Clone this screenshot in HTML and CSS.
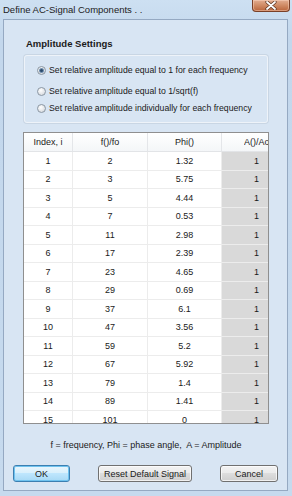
FILE: index.html
```html
<!DOCTYPE html>
<html>
<head>
<meta charset="utf-8">
<link rel="stylesheet" href="styles.css">
</head>
<body>
<div class="window">
  <div class="titlebar">
    <span class="title">Define AC-Signal Components . .</span>
    <div class="close"><svg width="12" height="9" viewBox="0 0 12 9"><path d="M2 1 L10 8 M10 1 L2 8" stroke="#5a3320" stroke-width="3.2" stroke-linecap="round"/><path d="M2 1 L10 8 M10 1 L2 8" stroke="#fff" stroke-width="1.8" stroke-linecap="round"/></svg></div>
  </div>
  <div class="client">
    <div class="heading">Amplitude Settings</div>
    <div class="group">
      <label class="radio r1"><span class="dot checked"></span>Set relative amplitude equal to 1 for each frequency</label>
      <label class="radio r2"><span class="dot"></span>Set relative amplitude equal to 1/sqrt(f)</label>
      <label class="radio r3"><span class="dot"></span>Set relative amplitude individually for each frequency</label>
    </div>
    <div class="grid">
      <div class="row head">
        <div class="c c1">Index, i</div>
        <div class="c c2">f()/fo</div>
        <div class="c c3">Phi()</div>
        <div class="c c4h"><span class="clip">A()/Ao</span></div>
      </div>
      <div class="row"><div class="c c1">1</div><div class="c c2">2</div><div class="c c3">1.32</div><div class="c c4">1</div></div>
      <div class="row"><div class="c c1">2</div><div class="c c2">3</div><div class="c c3">5.75</div><div class="c c4">1</div></div>
      <div class="row"><div class="c c1">3</div><div class="c c2">5</div><div class="c c3">4.44</div><div class="c c4">1</div></div>
      <div class="row"><div class="c c1">4</div><div class="c c2">7</div><div class="c c3">0.53</div><div class="c c4">1</div></div>
      <div class="row"><div class="c c1">5</div><div class="c c2">11</div><div class="c c3">2.98</div><div class="c c4">1</div></div>
      <div class="row"><div class="c c1">6</div><div class="c c2">17</div><div class="c c3">2.39</div><div class="c c4">1</div></div>
      <div class="row"><div class="c c1">7</div><div class="c c2">23</div><div class="c c3">4.65</div><div class="c c4">1</div></div>
      <div class="row"><div class="c c1">8</div><div class="c c2">29</div><div class="c c3">0.69</div><div class="c c4">1</div></div>
      <div class="row"><div class="c c1">9</div><div class="c c2">37</div><div class="c c3">6.1</div><div class="c c4">1</div></div>
      <div class="row"><div class="c c1">10</div><div class="c c2">47</div><div class="c c3">3.56</div><div class="c c4">1</div></div>
      <div class="row"><div class="c c1">11</div><div class="c c2">59</div><div class="c c3">5.2</div><div class="c c4">1</div></div>
      <div class="row"><div class="c c1">12</div><div class="c c2">67</div><div class="c c3">5.92</div><div class="c c4">1</div></div>
      <div class="row"><div class="c c1">13</div><div class="c c2">79</div><div class="c c3">1.4</div><div class="c c4">1</div></div>
      <div class="row"><div class="c c1">14</div><div class="c c2">89</div><div class="c c3">1.41</div><div class="c c4">1</div></div>
      <div class="row"><div class="c c1">15</div><div class="c c2">101</div><div class="c c3">0</div><div class="c c4">1</div></div>
    </div>
    <div class="legend">f = frequency, Phi = phase angle,&nbsp; A = Amplitude</div>
    <div class="buttons">
      <button class="btn ok">OK</button>
      <button class="btn reset">Reset Default Signal</button>
      <button class="btn cancel">Cancel</button>
    </div>
  </div>
</div>
</body>
</html>
```
FILE: styles.css
```css
html, body {
  margin: 0;
  padding: 0;
}
body {
  width: 292px;
  height: 496px;
  overflow: hidden;
  background: #c5d9ee;
  font-family: "Liberation Sans", Arial, sans-serif;
  font-size: 9px;
  color: #1a1a1a;
}
.window {
  width: 292px;
  height: 496px;
  display: flex;
  flex-direction: column;
  background: linear-gradient(#cde0f2, #c3d7ec 40px, #c6daee);
}
.titlebar {
  height: 19px;
  flex: none;
  display: flex;
  align-items: flex-start;
  justify-content: space-between;
}
.title {
  font-size: 9.5px;
  line-height: 12px;
  padding: 4px 0 0 3px;
  color: #1c1c1c;
}
.close {
  width: 36px;
  height: 11px;
  margin-right: 2px;
  border: 1px solid #7a4028;
  border-top: none;
  border-radius: 0 0 4px 4px;
  background: linear-gradient(#e2ad91, #cf8a64 50%, #b9643b);
  display: flex;
  align-items: center;
  justify-content: center;
  box-shadow: inset 0 0 0 1px rgba(255,220,200,0.45);
}
.client {
  flex: 1;
  margin: 0 4px 5px 3px;
  border: 1px solid #95a9c2;
  background: #d8e5f3;
  padding: 18px 18px 0 19px;
  display: flex;
  flex-direction: column;
}
.heading {
  font-weight: bold;
  font-size: 9.5px;
  line-height: 12px;
  padding-left: 3px;
  margin-bottom: 5px;
}
.group {
  margin: 0 1px;
  height: 68px;
  box-sizing: border-box;
  border: 1px solid #eef3f9;
  border-radius: 3px;
  box-shadow: 0 0 0 1px #c9d6e4;
  padding: 8px 0 8px 12px;
  display: flex;
  flex-direction: column;
}
.radio {
  display: flex;
  align-items: center;
  line-height: 12px;
  height: 12px;
  font-size: 8.7px;
}
.r2 { margin-top: 9px; }
.r3 { margin-top: 5px; }
.dot {
  width: 7px;
  height: 7px;
  border-radius: 50%;
  border: 1px solid #8b97a3;
  background: radial-gradient(circle at 40% 35%, #ffffff, #dcdfe3 70%, #c8ccd1);
  margin-right: 3px;
  display: flex;
  align-items: center;
  justify-content: center;
}
.dot.checked::after {
  content: "";
  width: 3px;
  height: 3px;
  border-radius: 50%;
  background: #2b4a6b;
  box-shadow: 0 0 0 1px #6f8eae;
}
.grid {
  margin-top: 9px;
  height: 292px;
  box-sizing: border-box;
  border: 1px solid #8f8f8f;
  background: #ffffff;
  overflow: hidden;
}
.row {
  display: grid;
  grid-template-columns: 49px 75px 74px 46px;
  height: 18.5px;
  border-bottom: 1px solid #ececec;
  box-sizing: border-box;
}
.row.head {
  height: 19px;
  background: linear-gradient(#ffffff, #f4f6f8);
  border-bottom: 1px solid #e2e4e7;
}
.c {
  display: flex;
  align-items: center;
  justify-content: center;
  border-right: 1px solid #ececec;
  overflow: hidden;
  white-space: nowrap;
}
.head .c { border-right-color: #e4e6e9; }
.c4h {
  justify-content: flex-start;
  padding-left: 22px;
  border-right: none;
}
.clip {
  display: block;
  width: 24px;
  overflow: hidden;
}
.c4 {
  background: #d9d9d9;
  border-right: none;
  justify-content: flex-end;
  padding-right: 9px;
}
.legend {
  margin-top: 15px;
  text-align: center;
  line-height: 12px;
}
.buttons {
  margin: 14px -9px 0 -10px;
  display: flex;
  justify-content: space-between;
}
.btn {
  height: 17px;
  padding: 0;
  border: 1px solid #707070;
  border-radius: 3px;
  background: linear-gradient(#f3f3f3, #ebebeb 45%, #dddddd 50%, #cfcfcf);
  font-family: "Liberation Sans", Arial, sans-serif;
  font-size: 9px;
  color: #1a1a1a;
  box-shadow: inset 0 0 0 1px rgba(255,255,255,0.7);
}
.ok {
  width: 57px;
  border-color: #3c7fb1;
  background: linear-gradient(#eaf6fd, #d9f0fc 45%, #bee6fd 50%, #a7d9f5);
  box-shadow: inset 0 0 0 1px #6fc3ef;
}
.reset { width: 94px; }
.cancel { width: 58px; }
```
